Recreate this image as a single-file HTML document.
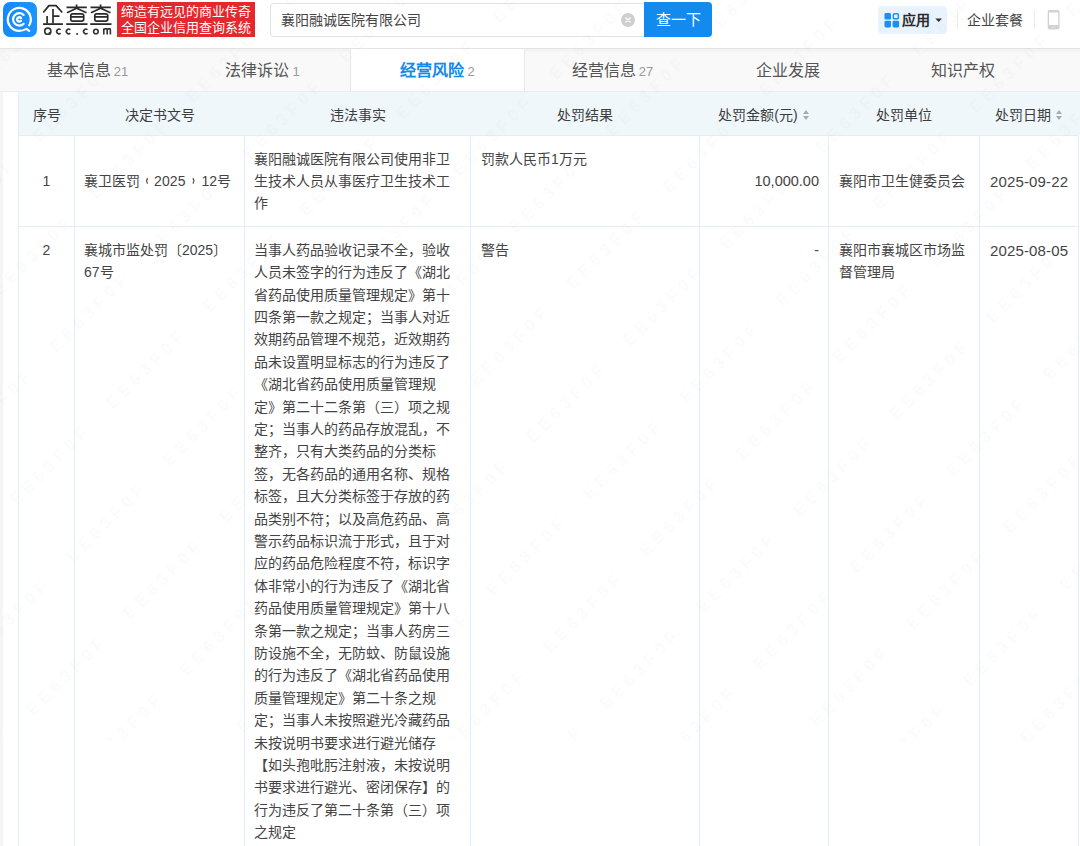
<!DOCTYPE html>
<html lang="zh-CN">
<head>
<meta charset="utf-8">
<style>
*{margin:0;padding:0;box-sizing:border-box;}
html,body{width:1080px;height:846px;overflow:hidden;background:#fff;}
body{font-family:"Liberation Sans",sans-serif;color:#333;font-size:14px;position:relative;}
.abs{position:absolute;}
/* header */
#hdr{position:absolute;left:0;top:0;width:1080px;height:49px;background:#fff;border-bottom:1px solid #e3e3e3;}
#logo{position:absolute;left:3px;top:2px;width:34px;height:35px;border-radius:7px;background:linear-gradient(90deg,#1688fb,#1b95ff);}
#brand{position:absolute;left:42px;top:1px;font-size:23px;line-height:26px;letter-spacing:0px;color:#222;}
#brand2{position:absolute;left:44px;top:25px;font-size:10px;line-height:12px;font-weight:bold;letter-spacing:3.6px;color:#333;}
#slogan{position:absolute;left:117px;top:2px;width:138px;height:35px;background:#e3282e;color:#fff;font-size:13px;line-height:15.5px;padding-top:2px;text-align:center;font-weight:500;}
#search{position:absolute;left:270px;top:3px;width:376px;height:34px;border:1px solid #e2e2e2;border-radius:4px;}
#search .t{position:absolute;left:10px;top:0;line-height:32px;font-size:14px;color:#444;}
#clear{position:absolute;left:621px;top:13px;width:14px;height:14px;border-radius:50%;background:#cfcfcf;}
#btn{position:absolute;left:644px;top:2px;width:68px;height:35px;background:#138bee;border-radius:0 4px 4px 0;color:#fff;font-size:15px;line-height:35px;text-align:center;}
#app{position:absolute;left:878px;top:6px;width:69px;height:28px;background:#e8f3fd;border-radius:4px;}
#app .t{position:absolute;left:24px;top:0;line-height:28px;font-size:14px;font-weight:bold;color:#2b2b2b;}
.div{position:absolute;top:10px;width:1px;height:18px;background:#ebebeb;}
#pkg{position:absolute;left:967px;top:0;line-height:40px;font-size:14px;color:#444;}
/* tabs */
#tabs{position:absolute;left:0;top:49px;width:1080px;height:43px;background:linear-gradient(#f2f2f2,#f9f9f9 4px);border-bottom:1px solid #ececec;}
.tab{position:absolute;top:0;width:175px;height:42px;text-align:center;line-height:44px;font-size:16px;color:#555;}
.tab .n{font-size:13px;color:#999;margin-left:3px;}
.tab.on{background:#fff;border-left:1px solid #e8e8e8;border-right:1px solid #e8e8e8;color:#128bed;font-weight:bold;}
.tab.on .n{font-weight:normal;}
/* table */
#side{position:absolute;left:0;top:92px;width:3px;height:754px;background:#f5f5f5;}
#tbl{position:absolute;left:18px;top:92px;border-collapse:collapse;table-layout:fixed;}
#tbl th{background:#f0f7fb;height:43px;padding-top:2px;font-weight:normal;font-size:14px;color:#3d3d3d;border-bottom:1px solid #e4eef6;text-align:center;}
.nw{white-space:nowrap;}
.brk{display:inline-block;width:14px;height:22px;vertical-align:top;}
.brk svg{display:block;}
.num{letter-spacing:0.1px;}
.dt{letter-spacing:0.15px;font-size:15px !important;white-space:nowrap;}
.amt{font-size:14.5px !important;}
#tbl td{border:1px solid #e4eef6;padding:12px 10px 11px;line-height:22.4px;font-size:14px;color:#444;vertical-align:top;word-break:break-all;}
#tbl tr:first-child th:first-child{border-left:1px solid #e4eef6;}
.sort{display:inline-block;width:7px;height:11px;margin-left:5px;vertical-align:-1px;position:relative;}
.sort:before{content:"";position:absolute;left:0;top:0;border-left:3.5px solid transparent;border-right:3.5px solid transparent;border-bottom:4.5px solid #aaa;}
.sort:after{content:"";position:absolute;left:0;top:6px;border-left:3.5px solid transparent;border-right:3.5px solid transparent;border-top:4.5px solid #aaa;}
</style>
</head>
<body>
<div id="hdr">
  <div id="logo"><svg width="34" height="35" viewBox="0 0 34 35">
    <g fill="none" stroke="#fff" stroke-width="2.2" stroke-linecap="round" stroke-linejoin="round">
      <path d="M26.21 23.24 A11.5 11.5 0 1 0 16.3 28.9 C19.3 28.9 21.5 28 23.4 26.9 L26.2 28.8"/>
      <path d="M20.61 12.94 A6.2 6.2 0 1 0 20.61 21.86"/>
      <path d="M17.99 15.99 A2.2 2.2 0 1 0 17.99 18.81" stroke-width="2.4"/>
    </g></svg></div>
  <svg id="brand" width="75" height="40" viewBox="40 0 75 40" style="position:absolute;left:40px;top:0">
    <g fill="none" stroke="#2a2a2a" stroke-width="1.7" stroke-linecap="butt" stroke-linejoin="round">
      <path d="M43.3 12.5 L48.9 5.6 L56.1 5.6 L62.3 12.5"/>
      <path d="M53 9 V23.6 M53 16.1 H59.5 M47.1 16 V23.6"/>
      <path d="M43.1 24.1 H62.9" stroke-width="1.8"/>
      <g id="cha">
      <path d="M66.5 7.4 H86.8 M76.6 4.4 V8.2 M76.6 8.2 L67 12.8 M76.6 8.2 L86.5 12.8"/>
      <path d="M72.6 13.8 H81.8 Q83.7 13.8 83.7 15.7 V19.3 Q83.7 21.1 81.8 21.1 H72.6 Q70.8 21.1 70.8 19.3 V15.7 Q70.8 13.8 72.6 13.8 Z M70.8 16.9 H83.7"/>
      <path d="M66.2 24.1 H87.5" stroke-width="1.8"/>
      </g>
      <use href="#cha" x="24" y="0"/>
    </g>
    <g fill="none" stroke="#333" stroke-width="1.6">
      <circle cx="47.8" cy="31.2" r="3.1"/>
      <path d="M49 32.3 L50.6 34.2"/>
      <path d="M60.6 29.8 A2.3 2.3 0 1 0 60.6 33.1"/>
      <path d="M70.3 29.8 A2.3 2.3 0 1 0 70.3 33.1"/>
      <path d="M87.5 29.8 A2.3 2.3 0 1 0 87.5 33.1"/>
      <circle cx="95.9" cy="31.5" r="2.3"/>
      <path d="M103.8 34.6 V28.6 M103.8 30.2 Q104.6 28.6 105.9 28.6 Q107.2 28.6 107.2 30.2 V34.6 M107.2 30.2 Q108 28.6 109.2 28.6 Q110.4 28.6 110.4 30.2 V34.6"/>
    </g>
    <circle cx="77.1" cy="33.9" r="1" fill="#333"/>
  </svg>
  <div id="slogan">缔造有远见的商业传奇<br>全国企业信用查询系统</div>
  <div id="search"><div class="t">襄阳融诚医院有限公司</div></div>
  <div id="clear"><svg width="14" height="14" viewBox="0 0 14 14" style="position:absolute;left:0;top:0"><path d="M4.9 4.9 L9.1 9.1 M9.1 4.9 L4.9 9.1" stroke="#fff" stroke-width="1.4" stroke-linecap="round"/></svg></div>
  <div id="btn">查一下</div>
  <div id="app"><svg width="70" height="28" viewBox="878 6 70 28" style="position:absolute;left:0;top:0">
    <rect x="884.5" y="13.1" width="6.5" height="6.5" rx="1.3" fill="#1a8ff4"/>
    <rect x="893.35" y="13.85" width="5" height="5" rx="1.2" fill="none" stroke="#1a8ff4" stroke-width="1.5"/>
    <rect x="884.5" y="20.8" width="6.5" height="6.6" rx="1.3" fill="#1a8ff4"/>
    <rect x="892.6" y="20.8" width="6.5" height="6.6" rx="1.3" fill="#1a8ff4"/>
    <path d="M935.3 18.6 H942 L938.65 22 Z" fill="#333"/>
  </svg><div class="t">应用</div></div>
  <div class="div" style="left:957px"></div>
  <div id="pkg">企业套餐</div>
  <div class="div" style="left:1034px"></div>
  <svg width="14" height="22" viewBox="1047 9 14 22" style="position:absolute;left:1047px;top:9px">
    <rect x="1048.35" y="10.6" width="10.5" height="18" rx="2" fill="none" stroke="#d2d2d2" stroke-width="1.3"/>
    <rect x="1048" y="10.3" width="11.2" height="2.2" rx="1" fill="#d2d2d2"/>
    <rect x="1048" y="25" width="11.2" height="4.2" rx="1.5" fill="#d2d2d2"/>
    <rect x="1052" y="27" width="3.2" height="0.8" fill="#e6e6e6"/>
  </svg>
</div>
<div id="tabs">
  <div class="tab" style="left:0">基本信息<span class="n">21</span></div>
  <div class="tab" style="left:175px">法律诉讼<span class="n">1</span></div>
  <div class="tab on" style="left:350px">经营风险<span class="n">2</span></div>
  <div class="tab" style="left:525px">经营信息<span class="n">27</span></div>
  <div class="tab" style="left:700px">企业发展</div>
  <div class="tab" style="left:875px">知识产权</div>
</div>
<div id="side"></div>
<div style="position:absolute;left:1070px;top:92px;width:10px;height:43px;background:#f0f7fb;border-bottom:1px solid #e4eef6"></div>
<table id="tbl">
<colgroup><col style="width:56px"><col style="width:170px"><col style="width:226px"><col style="width:229px"><col style="width:129px"><col style="width:151px"><col style="width:99px"></colgroup>
<tr><th>序号</th><th>决定书文号</th><th>违法事实</th><th>处罚结果</th><th>处罚金额(元)<span class="sort"></span></th><th>处罚单位</th><th>处罚日期<span class="sort"></span></th></tr>
<tr>
<td style="text-align:center;vertical-align:middle">1</td>
<td style="vertical-align:middle;padding-left:9px" class="nw">襄卫医罚<span class="brk"><svg width="14" height="22" viewBox="0 0 14 22"><path d="M7.6 8.2 Q5.6 10.9 7.6 13.6" fill="none" stroke="#555" stroke-width="1.2"/></svg></span><span class="num">2025</span><span class="brk" style="width:16px"><svg width="16" height="22" viewBox="0 0 16 22"><path d="M6.9 8.2 Q8.9 10.9 6.9 13.6" fill="none" stroke="#555" stroke-width="1.2"/></svg></span>12号</td>
<td class="nw" style="padding-left:9px">襄阳融诚医院有限公司使用非卫<br>生技术人员从事医疗卫生技术工<br>作</td>
<td>罚款人民币1万元</td>
<td style="text-align:right;vertical-align:middle;padding-right:9px" class="amt">10,000.00</td>
<td style="vertical-align:middle">襄阳市卫生健委员会</td>
<td style="vertical-align:middle" class="dt"><span style="position:relative;top:1px">2025-09-22</span></td>
</tr>
<tr>
<td style="text-align:center">2</td>
<td class="nw" style="padding-left:9px">襄城市监处罚〔2025〕<br>67号</td>
<td class="nw" style="padding-left:9px;padding-bottom:30px">当事人药品验收记录不全，验收<br>人员未签字的行为违反了《湖北<br>省药品使用质量管理规定》第十<br>四条第一款之规定；当事人对近<br>效期药品管理不规范，近效期药<br>品未设置明显标志的行为违反了<br>《湖北省药品使用质量管理规<br>定》第二十二条第（三）项之规<br>定；当事人的药品存放混乱，不<br>整齐，只有大类药品的分类标<br>签，无各药品的通用名称、规格<br>标签，且大分类标签于存放的药<br>品类别不符；以及高危药品、高<br>警示药品标识流于形式，且于对<br>应的药品危险程度不符，标识字<br>体非常小的行为违反了《湖北省<br>药品使用质量管理规定》第十八<br>条第一款之规定；当事人药房三<br>防设施不全，无防蚊、防鼠设施<br>的行为违反了《湖北省药品使用<br>质量管理规定》第二十条之规<br>定；当事人未按照避光冷藏药品<br>未按说明书要求进行避光储存<br>【如头孢吡肟注射液，未按说明<br>书要求进行避光、密闭保存】的<br>行为违反了第二十条第（三）项<br>之规定</td>
<td>警告</td>
<td style="text-align:right;padding-right:9px">-</td>
<td class="nw">襄阳市襄城区市场监<br>督管理局</td>
<td class="dt"><span style="position:relative;top:1px">2025-08-05</span></td>
</tr>
</table>
<svg id="wm" width="1080" height="741" style="position:absolute;left:0;top:0;pointer-events:none">
<defs><pattern id="wp" patternUnits="userSpaceOnUse" width="136.6" height="80.2" patternTransform="translate(511.7 344.1) rotate(-45) translate(-68.3 -40.1)">
<text x="66.5" y="45.8" text-anchor="middle" font-family="Liberation Sans" font-weight="bold" font-size="16" letter-spacing="5.6" fill="#000" fill-opacity="0.015">EE63F0F</text>
</pattern></defs>
<rect width="1080" height="741" fill="url(#wp)"/>
</svg>
</body>
</html>
